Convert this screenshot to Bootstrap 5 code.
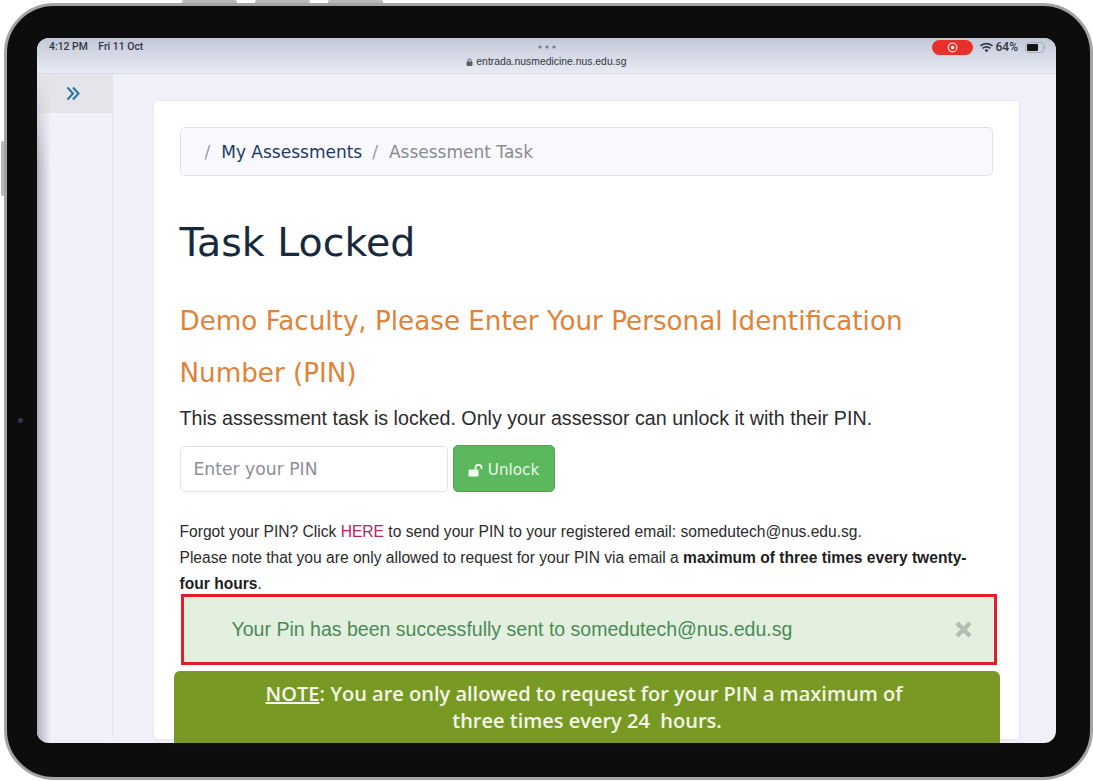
<!DOCTYPE html>
<html lang="en">
<head>
    <meta charset="UTF-8">
    <meta name="viewport" content="width=device-width, initial-scale=1.0">
    <title>Task Locked</title>
    <link href="https://cdn.jsdelivr.net/npm/bootstrap@5.3.0/dist/css/bootstrap.min.css" rel="stylesheet">
    <style>
        html, body { height: 781px; overflow: hidden; background: #fff; }
        body { font-family: "Liberation Sans", Arial, sans-serif; position: relative; }
        .hw-btn { position: absolute; background: #b9b9b9; }
        .hw-top { top: 0; height: 4px; border-radius: 2px 2px 0 0; }
        .hw-side { left: 1px; top: 141px; width: 4px; height: 55px; border-radius: 2px 0 0 2px; }
        .tablet { position: absolute; left: 4px; top: 3px; width: 1089px; height: 777px; background: #0d0d0d; border: 3px solid #a4a4a4; border-radius: 50px; padding: 32px 34px 34px 30px; }
        .camera { position: absolute; left: 11px; top: 412px; width: 5px; height: 5px; border-radius: 50%; background: #34344e; }
        .screen { position: relative; height: 705px; width: 1019px; border-radius: 12px; overflow: hidden; background: #f0effa; }
        .screen::after { content: ""; position: absolute; left: 0; top: 36px; bottom: 0; width: 14px; background: linear-gradient(to right, #b2b2bc, rgba(240,239,250,0)); -webkit-mask-image: linear-gradient(to bottom, transparent, #000 90px); mask-image: linear-gradient(to bottom, transparent, #000 90px); pointer-events: none; }
        .ipad-bar { height: 36px; flex: none; background: linear-gradient(#c2c8d7, #e8ebf4); border-bottom: 1px solid #dcdce6; color: #33373f; padding: 0 10px 0 12px; position: relative; font-family: Roboto, sans-serif; }
        .ipad-time { font-weight: 500; font-size: 10.4px; line-height: 18px; }
        .ipad-time span { margin-left: 8px; }
        .ipad-url { position: absolute; left: 0; right: 0; top: 7px; text-align: center; line-height: 11px; font-family: "Liberation Sans", sans-serif; font-size: 10.4px; color: #33373f; }
        .ipad-dots { display: block; margin: 0 auto 7px; }
        .ipad-right { gap: 6px; }
        .rec-pill { width: 41px; height: 15px; border-radius: 8px; background: #e8302b; margin-top: 2px; }
        .ipad-batt { font-size: 12px; font-weight: 500; gap: 2px; }
        .ipad-pct { margin-right: 5px; }
        .side-col { width: 76px; flex: none; background: #f1f1fa; border-right: 1px solid #e4e4ec; margin-bottom: 4px; border-bottom-right-radius: 5px; }
        .side-toggle { height: 39px; background: #e4e4ea; padding-left: 29px; padding-top: 12px; }
        .main-col { padding: 26px 36px 0 40px; min-width: 0; }
        .pin-card { background: #fff; border: 1px solid #e8e8f0; border-radius: 5px; height: 640px; padding: 26px 26px 0 25.5px; }
        .crumbs { height: 49px; background: #f9f8fd; border: 1px solid #e2e2ee; border-radius: 5px; padding: 2px 24px 0; font-family: "DejaVu Sans", sans-serif; font-size: 17px; margin: 0; }
        .crumbs .crumb-link { color: #1f3a68; }
        .crumbs .crumb-sep { color: #9a9aa2; margin-right: 11px; }
        .crumbs .crumb-now { color: #888b90; margin-left: 10px; }
        .task-title { font-family: "DejaVu Sans", sans-serif; font-size: 39.5px; color: #17293d; font-weight: 400; margin: 44px 0 0; line-height: 44px; }
        .task-sub { font-family: "DejaVu Sans", sans-serif; font-size: 26.2px; font-weight: 400; color: #e0833a; line-height: 52px; margin: 31px 0 0; }
        .task-lead { font-size: 19.67px; color: #2b2b2b; line-height: 26px; margin: 6px 0 14px; }
        .pin-input { width: 268px; height: 46px; border: 1px solid #e6e2ee; border-radius: 5px; padding: 0 13px; font-family: "DejaVu Sans", sans-serif; font-size: 17.2px; color: #8e8e96; box-shadow: none; }
        .pin-input::placeholder { color: #8e8e96; }
        .pin-btn { width: 102px; height: 47px; margin-left: 5px; background: #5cb85c; border: 1px solid #4ea24e; border-radius: 5px; color: #eaf6ea; font-family: "DejaVu Sans", sans-serif; font-size: 15.2px; padding: 3px 0 0; }
        .pin-note { font-size: 15.6px; color: #2b2b2b; line-height: 26px; margin: 27px 0 -3px; }
        .pin-note a { color: #c0215a; text-decoration: none; }
        .pin-note b { color: #1e1e1e; }
        .sent-alert { height: 71px; margin: 0 -1px 0 1px; background: #e4f0df; color: #4a8a55; border: 3px solid #e01f2c; border-radius: 0; font-size: 19.55px; padding: 0 21px 0 48px; width: 816px; }
        .sent-x { color: #b3bdb2; }
        .note-bar { position: absolute; left: 137px; top: 633px; width: 826px; height: 72px; background: #789a25; border-radius: 6px 6px 0 0; color: #f4f6e8; font-family: "Open Sans", sans-serif; font-weight: 600; font-size: 20px; line-height: 27px; text-align: center; padding-top: 9px; }
        .note-first { padding-right: 6px; }
    </style>
</head>
<body>
    <div class="hw-btn hw-top" style="left:182px;width:55px"></div>
    <div class="hw-btn hw-top" style="left:255px;width:55px"></div>
    <div class="hw-btn hw-top" style="left:328px;width:55px"></div>
    <div class="hw-btn hw-side"></div>

    <div class="tablet">
        <div class="camera"></div>
        <div class="screen d-flex flex-column">
            <div class="ipad-bar d-flex justify-content-between">
                <div class="ipad-time">4:12 PM <span>Fri 11 Oct</span></div>
                <div class="ipad-url">
                    <svg class="ipad-dots" width="18" height="4" viewBox="0 0 18 4"><circle cx="2" cy="2" r="1.6" fill="#777b86"/><circle cx="9" cy="2" r="1.6" fill="#777b86"/><circle cx="16" cy="2" r="1.6" fill="#777b86"/></svg>
                    <svg width="7" height="8" viewBox="0 0 7 8"><rect x="0.5" y="3.5" width="6" height="4.5" rx="1" fill="#5a5e68"/><path d="M2 4V2.4a1.5 1.5 0 0 1 3 0V4" fill="none" stroke="#5a5e68"/></svg>
                    entrada.nusmedicine.nus.edu.sg
                </div>
                <div class="d-flex align-items-start ipad-right position-relative">
                    <div class="rec-pill d-flex align-items-center justify-content-center">
                        <svg width="11" height="11" viewBox="0 0 11 11"><circle cx="5.5" cy="5.5" r="4.3" fill="none" stroke="#fbd9d6" stroke-width="1.2"/><circle cx="5.5" cy="5.5" r="1.8" fill="#fbe6e4"/></svg>
                    </div>
                    <div class="d-flex align-items-center ipad-batt" style="height:18px">
                        <svg width="15" height="11" viewBox="0 0 13 10"><path d="M1 3.6a8 8 0 0 1 11 0M3 5.8a5 5 0 0 1 7 0" fill="none" stroke="#33363e" stroke-width="1.5"/><path d="M4.8 7.4a2.6 2.6 0 0 1 3.4 0L6.5 9.4z" fill="#33363e"/></svg>
                        <span class="ipad-pct">64%</span>
                        <svg width="21" height="11" viewBox="0 0 21 11"><rect x="0.5" y="0.5" width="18" height="10" rx="3" fill="none" stroke="#a9acb5"/><rect x="2" y="2" width="11" height="7" rx="1.3" fill="#141414"/><path d="M19.5 3.5c1.3.6 1.3 3.4 0 4z" fill="#a9acb5"/></svg>
                    </div>
                </div>
            </div>
            <div class="d-flex flex-grow-1">
                <div class="side-col">
                    <div class="side-toggle">
                        <svg class="d-block" width="14" height="15" viewBox="0 0 14 15"><path d="M1.5 1.5 7 7.5l-5.5 6M7 1.5l5.5 6-5.5 6" fill="none" stroke="#2a6fa8" stroke-width="2"/></svg>
                    </div>
                </div>
                <div class="main-col flex-grow-1">
                    <div class="pin-card">
                        <div class="crumbs d-flex align-items-center">
                            <span class="crumb-sep">/</span>
                            <span class="crumb-link">My Assessments</span>
                            <span class="crumb-now"><span class="crumb-sep">/</span>Assessment Task</span>
                        </div>
                        <h1 class="task-title">Task Locked</h1>
                        <h3 class="task-sub">Demo Faculty, Please Enter Your Personal Identification Number (PIN)</h3>
                        <p class="task-lead">This assessment task is locked. Only your assessor can unlock it with their PIN.</p>
                        <div class="d-flex align-items-center">
                            <input class="form-control pin-input" type="text" placeholder="Enter your PIN">
                            <button class="btn pin-btn d-flex align-items-center justify-content-center gap-1" type="button">
                                <svg width="16" height="13" viewBox="0 0 16 13"><rect x="0.5" y="5.5" width="10" height="7" rx="1" fill="#f2faf2"/><path d="M7.5 6V3.8a3 3 0 0 1 6 0V5" fill="none" stroke="#f2faf2" stroke-width="1.8"/></svg>
                                Unlock
                            </button>
                        </div>
                        <p class="pin-note">Forgot your PIN? Click <a href="#">HERE</a> to send your PIN to your registered email: somedutech@nus.edu.sg.<br>Please note that you are only allowed to request for your PIN via email a <b>maximum of three times every twenty-</b><br><b>four hours</b>.</p>
                        <div class="alert sent-alert d-flex align-items-center justify-content-between mb-0">
                            <span>Your Pin has been successfully sent to somedutech@nus.edu.sg</span>
                            <svg class="sent-x" width="19" height="19" viewBox="0 0 19 19"><path d="M3 3l13 13M16 3 3 16" stroke="currentColor" stroke-width="4.4"/></svg>
                        </div>
                    </div>
                </div>
            </div>
            <div class="note-bar"><span class="note-first"><u>NOTE</u>: You are only allowed to request for your PIN a maximum of</span><br>three times every 24&nbsp; hours.</div>
        </div>
    </div>
</body>
</html>
